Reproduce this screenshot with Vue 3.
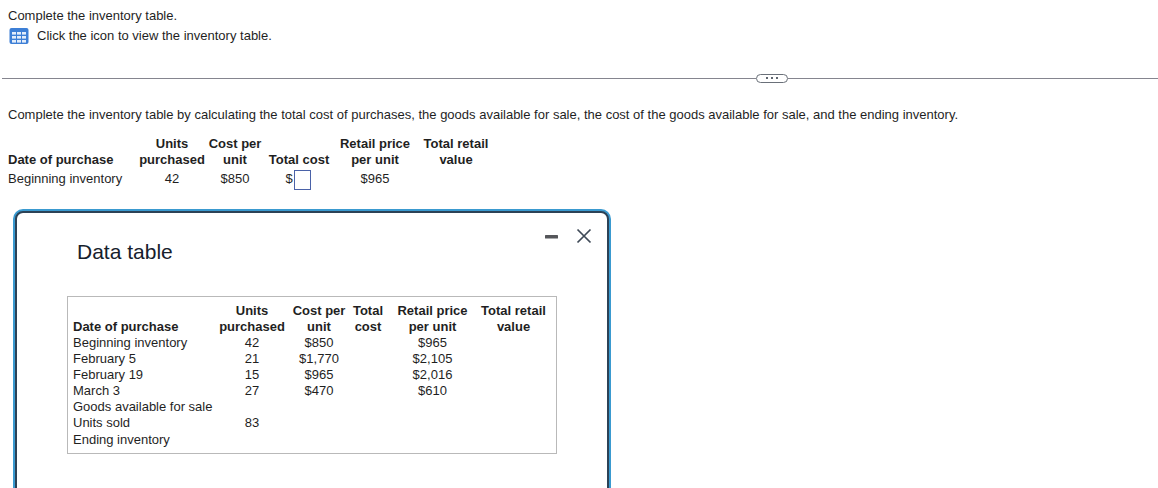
<script setup>
const topHead = [
  ['', 'Date of purchase'],
  ['Units', 'purchased'],
  ['Cost per', 'unit'],
  ['', 'Total cost'],
  ['Retail price', 'per unit'],
  ['Total retail', 'value']
]
const dataHead = [
  ['', 'Date of purchase'],
  ['Units', 'purchased'],
  ['Cost per', 'unit'],
  ['Total', 'cost'],
  ['Retail price', 'per unit'],
  ['Total retail', 'value']
]
const rows = [
  ['Beginning inventory', '42', '$850', '', '$965', ''],
  ['February 5', '21', '$1,770', '', '$2,105', ''],
  ['February 19', '15', '$965', '', '$2,016', ''],
  ['March 3', '27', '$470', '', '$610', ''],
  ['Goods available for sale', '', '', '', '', ''],
  ['Units sold', '83', '', '', '', ''],
  ['Ending inventory', '', '', '', '', '']
]
</script>

<template>
  <div class="page">
    <p class="line first">Complete the inventory table.</p>
    <div class="iconline">
      <svg class="tableicon" width="20" height="18" viewBox="0 0 20 18">
        <rect x="0.5" y="1" width="19" height="16" rx="2" fill="#3d7fd6" />
        <g fill="#e3edfa">
          <rect x="3" y="5" width="4" height="2.6" /><rect x="8" y="5" width="4" height="2.6" /><rect x="13" y="5" width="4" height="2.6" />
          <rect x="3" y="9" width="4" height="2.6" /><rect x="8" y="9" width="4" height="2.6" /><rect x="13" y="9" width="4" height="2.6" />
          <rect x="3" y="13" width="4" height="2.6" /><rect x="8" y="13" width="4" height="2.6" /><rect x="13" y="13" width="4" height="2.6" />
        </g>
      </svg>
      <span>Click the icon to view the inventory table.</span>
    </div>

    <div class="divider">
      <span class="rule rule-left"></span>
      <span class="more"><i></i><i></i><i></i></span>
      <span class="rule"></span>
    </div>

    <p class="line prompt">Complete the inventory table by calculating the total cost of purchases, the goods available for sale, the cost of the goods available for sale, and the ending inventory.</p>

    <div class="toptable">
      <div v-for="(h, i) in topHead" :key="i" class="headcell" :class="{ left: i === 0 }">
        <span>{{ h[0] || '&nbsp;' }}</span>
        <span>{{ h[1] }}</span>
      </div>
      <div class="cell left row1">Beginning inventory</div>
      <div class="cell row1">42</div>
      <div class="cell row1">$850</div>
      <div class="cell row1 inputcell">$<span class="answer"></span></div>
      <div class="cell row1">$965</div>
      <div class="cell row1"></div>
    </div>

    <section class="modal">
      <header class="modalhead">
        <h2>Data table</h2>
        <svg class="winicons" width="50" height="16" viewBox="0 0 50 16">
          <rect x="0" y="7" width="13" height="3.6" rx="0.6" fill="#55565a" />
          <path d="M32.5 1.5 L45.5 14.5 M45.5 1.5 L32.5 14.5" stroke="#3f4a57" stroke-width="1.7" fill="none" />
        </svg>
      </header>
      <div class="databox">
        <div class="datagrid">
          <div v-for="(h, i) in dataHead" :key="i" class="headcell" :class="{ left: i === 0 }">
            <span>{{ h[0] || '&nbsp;' }}</span>
            <span>{{ h[1] }}</span>
          </div>
          <template v-for="(r, ri) in rows" :key="ri">
            <div v-for="(c, ci) in r" :key="ci" class="cell" :class="{ left: ci === 0, last: ri === rows.length - 1 }">{{ c }}</div>
          </template>
        </div>
      </div>
    </section>
  </div>
</template>

<style scoped>
.page {
  width: 1158px;
  height: 488px;
  overflow: hidden;
  font-family: "Liberation Sans", Arial, sans-serif;
  font-size: 13px;
  line-height: 16px;
  color: #1f1f1f;
  box-sizing: border-box;
  padding-top: 8px;
}
.line {
  margin: 0;
  padding-left: 8px;
}
.iconline {
  display: flex;
  align-items: center;
  gap: 8px;
  margin-top: 3px;
  padding-left: 9px;
  height: 18px;
}
.tableicon {
  flex: none;
}
.divider {
  display: flex;
  align-items: center;
  height: 10px;
  margin-top: 28px;
  padding-left: 2px;
}
.rule {
  flex: 1;
  height: 1px;
  background: #85858f;
}
.rule-left {
  flex: none;
  width: 754px;
}
.more {
  flex: none;
  width: 30px;
  height: 7px;
  border: 1px solid #6a7079;
  border-radius: 5px;
  display: flex;
  align-items: center;
  justify-content: center;
  gap: 3px;
}
.more i {
  width: 2px;
  height: 2px;
  background: #5f6670;
}
.prompt {
  margin-top: 24px;
}
.toptable {
  display: grid;
  grid-template-columns: 131px 66px 60px 68px 84px 78px;
  grid-template-rows: 32px 22px;
  width: 488px;
  margin: 13px 0 0 8px;
}
.headcell {
  display: flex;
  flex-direction: column;
  align-items: center;
  font-weight: 700;
  white-space: nowrap;
}
.headcell.left {
  align-items: flex-start;
}
.cell {
  text-align: center;
  white-space: nowrap;
}
.cell.left {
  text-align: left;
}
.cell.last {
  padding-top: 1px;
}
.row1 {
  line-height: 22px;
}
.inputcell {
  display: flex;
  align-items: center;
  justify-content: center;
  gap: 1px;
  padding-right: 2px;
}
.answer {
  display: block;
  width: 15px;
  height: 18px;
  margin-top: 2px;
  border: 1px solid #4a62a8;
}
.modal {
  box-sizing: border-box;
  width: 594px;
  height: 320px;
  margin: 21px 0 0 15px;
  border: 2px solid #2c4256;
  border-radius: 8px;
  box-shadow: 0 0 0 2px #3a9ad0;
  background: #fff;
}
.modalhead {
  display: flex;
  justify-content: space-between;
  align-items: flex-start;
  padding: 15px 12px 0 60px;
  height: 68px;
  box-sizing: border-box;
}
.modalhead h2 {
  margin: 12px 0 0;
  font-size: 21px;
  line-height: 24px;
  font-weight: 400;
  color: #16202c;
}
.winicons {
  flex: none;
}
.databox {
  box-sizing: border-box;
  width: 490px;
  height: 158px;
  margin: 15px 0 0 50px;
  border: 1px solid #b9b9b9;
  padding: 6px 0 0 5px;
}
.datagrid {
  display: grid;
  grid-template-columns: 144px 70px 64px 34px 95px 67px;
  grid-auto-rows: 16px;
}
.datagrid .headcell {
  grid-row: span 2;
}
</style>
